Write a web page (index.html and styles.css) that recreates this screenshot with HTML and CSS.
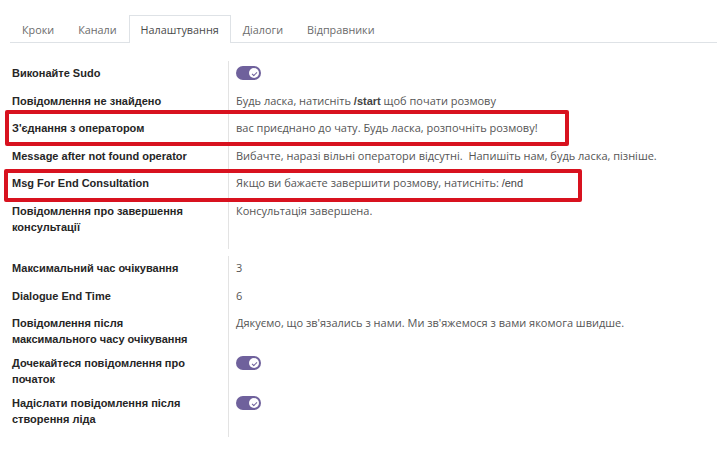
FILE: index.html
```html
<!DOCTYPE html>
<html lang="uk">
<head>
    <meta charset="UTF-8">
    <meta name="viewport" content="width=device-width, initial-scale=1.0">
    <title>Налаштування</title>
    <link rel="stylesheet" href="styles.css">
</head>
<body>
    <div class="sheet">
        <ul class="tabs">
            <li class="tab">Кроки</li>
            <li class="tab">Канали</li>
            <li class="tab active">Налаштування</li>
            <li class="tab">Діалоги</li>
            <li class="tab">Відправники</li>
        </ul>

        <div class="group first">
            <!-- highlight frames from the annotated screenshot -->
            <div class="mark mark-operator"></div>
            <div class="mark mark-end"></div>

            <div class="row">
                <div class="label">Виконайте Sudo</div>
                <div class="value"><span class="toggle"></span></div>
            </div>
            <div class="row">
                <div class="label">Повідомлення не знайдено</div>
                <div class="value">Будь ласка, натисніть <b class="cmd">/start</b> щоб почати розмову</div>
            </div>
            <div class="row">
                <div class="label">З'єднання з оператором</div>
                <div class="value">вас приєднано до чату. Будь ласка, розпочніть розмову!</div>
            </div>
            <div class="row">
                <div class="label">Message after not found operator</div>
                <div class="value">Вибачте, наразі вільні оператори відсутні.&nbsp; Напишіть нам, будь ласка, пізніше.</div>
            </div>
            <div class="row">
                <div class="label">Msg For End Consultation</div>
                <div class="value">Якщо ви бажаєте завершити розмову, натисніть: <span class="cmd">/end</span></div>
            </div>
            <div class="row">
                <div class="label">Повідомлення про завершення консультації</div>
                <div class="value">Консультація завершена.</div>
            </div>
        </div>

        <div class="group">
            <div class="row">
                <div class="label">Максимальний час очікування</div>
                <div class="value">3</div>
            </div>
            <div class="row">
                <div class="label">Dialogue End Time</div>
                <div class="value">6</div>
            </div>
            <div class="row">
                <div class="label">Повідомлення після максимального часу очікування</div>
                <div class="value">Дякуємо, що зв'язались з нами. Ми зв'яжемося з вами якомога швидше.</div>
            </div>
            <div class="row">
                <div class="label">Дочекайтеся повідомлення про початок</div>
                <div class="value"><span class="toggle"></span></div>
            </div>
            <div class="row">
                <div class="label">Надіслати повідомлення після створення ліда</div>
                <div class="value"><span class="toggle"></span></div>
            </div>
        </div>
    </div>
</body>
</html>
```

FILE: styles.css
```css
* { margin: 0; padding: 0; box-sizing: border-box; }
body {
    background: #fff;
    font-family: 'Open Sans', sans-serif;
    font-size: 11px;
    color: #555;
}
.sheet {
    padding: 15px 0 0 10px;
}
.tabs {
    display: flex;
    list-style: none;
    border-bottom: 1px solid #dee2e6;
}
.tab {
    padding: 5px 11px 4px;
    line-height: 17px;
    font-size: 10.8px;
    color: #6b6b6b;
    border: 1px solid transparent;
    border-bottom: none;
    margin-bottom: -1px;
}
.tab.active {
    background: #fff;
    color: #4a4a4a;
    border-color: #dee2e6;
    padding-bottom: 5px;
}
.group {
    position: relative;
    margin-top: 18px;
}
.group + .group {
    margin-top: 7.5px;
}
.row {
    display: flex;
    min-height: 27.5px;
}
.label {
    width: 218px;
    flex: none;
    padding: 4px 21px 4px 2px;
    line-height: 16px;
    font-family: 'Liberation Sans', Arial, sans-serif;
    font-weight: bold;
    font-size: 11px;
    color: #262626;
}
.row:last-child .label {
    padding-bottom: 14px;
}
.group + .group .row:last-child .label {
    padding-bottom: 10px;
}
.value {
    flex: 1;
    border-left: 1px solid #e3e3e3;
    padding: 4px 0 4px 7px;
    line-height: 16px;
}
.cmd {
    font-family: 'Liberation Sans', Arial, sans-serif;
    color: #444;
}
.toggle {
    display: inline-block;
    position: relative;
    width: 25px;
    height: 14px;
    margin-top: 1px;
    border-radius: 7px;
    background: #6f619c;
    vertical-align: top;
}
.toggle::after {
    content: '';
    position: absolute;
    right: 2px;
    top: 2px;
    width: 10px;
    height: 10px;
    border-radius: 50%;
    background: #fff;
}
.toggle::before {
    content: '';
    position: absolute;
    z-index: 1;
    right: 5.5px;
    top: 4.5px;
    width: 2px;
    height: 4px;
    border: solid #6f619c;
    border-width: 0 1.3px 1.3px 0;
    transform: rotate(45deg);
}
.mark {
    position: absolute;
    border: 4px solid #d8121f;
    border-radius: 2px;
}
.mark-operator {
    left: -5px;
    top: 49px;
    width: 564px;
    height: 36px;
}
.mark-end {
    left: -6px;
    top: 108px;
    width: 578px;
    height: 33px;
}
```
